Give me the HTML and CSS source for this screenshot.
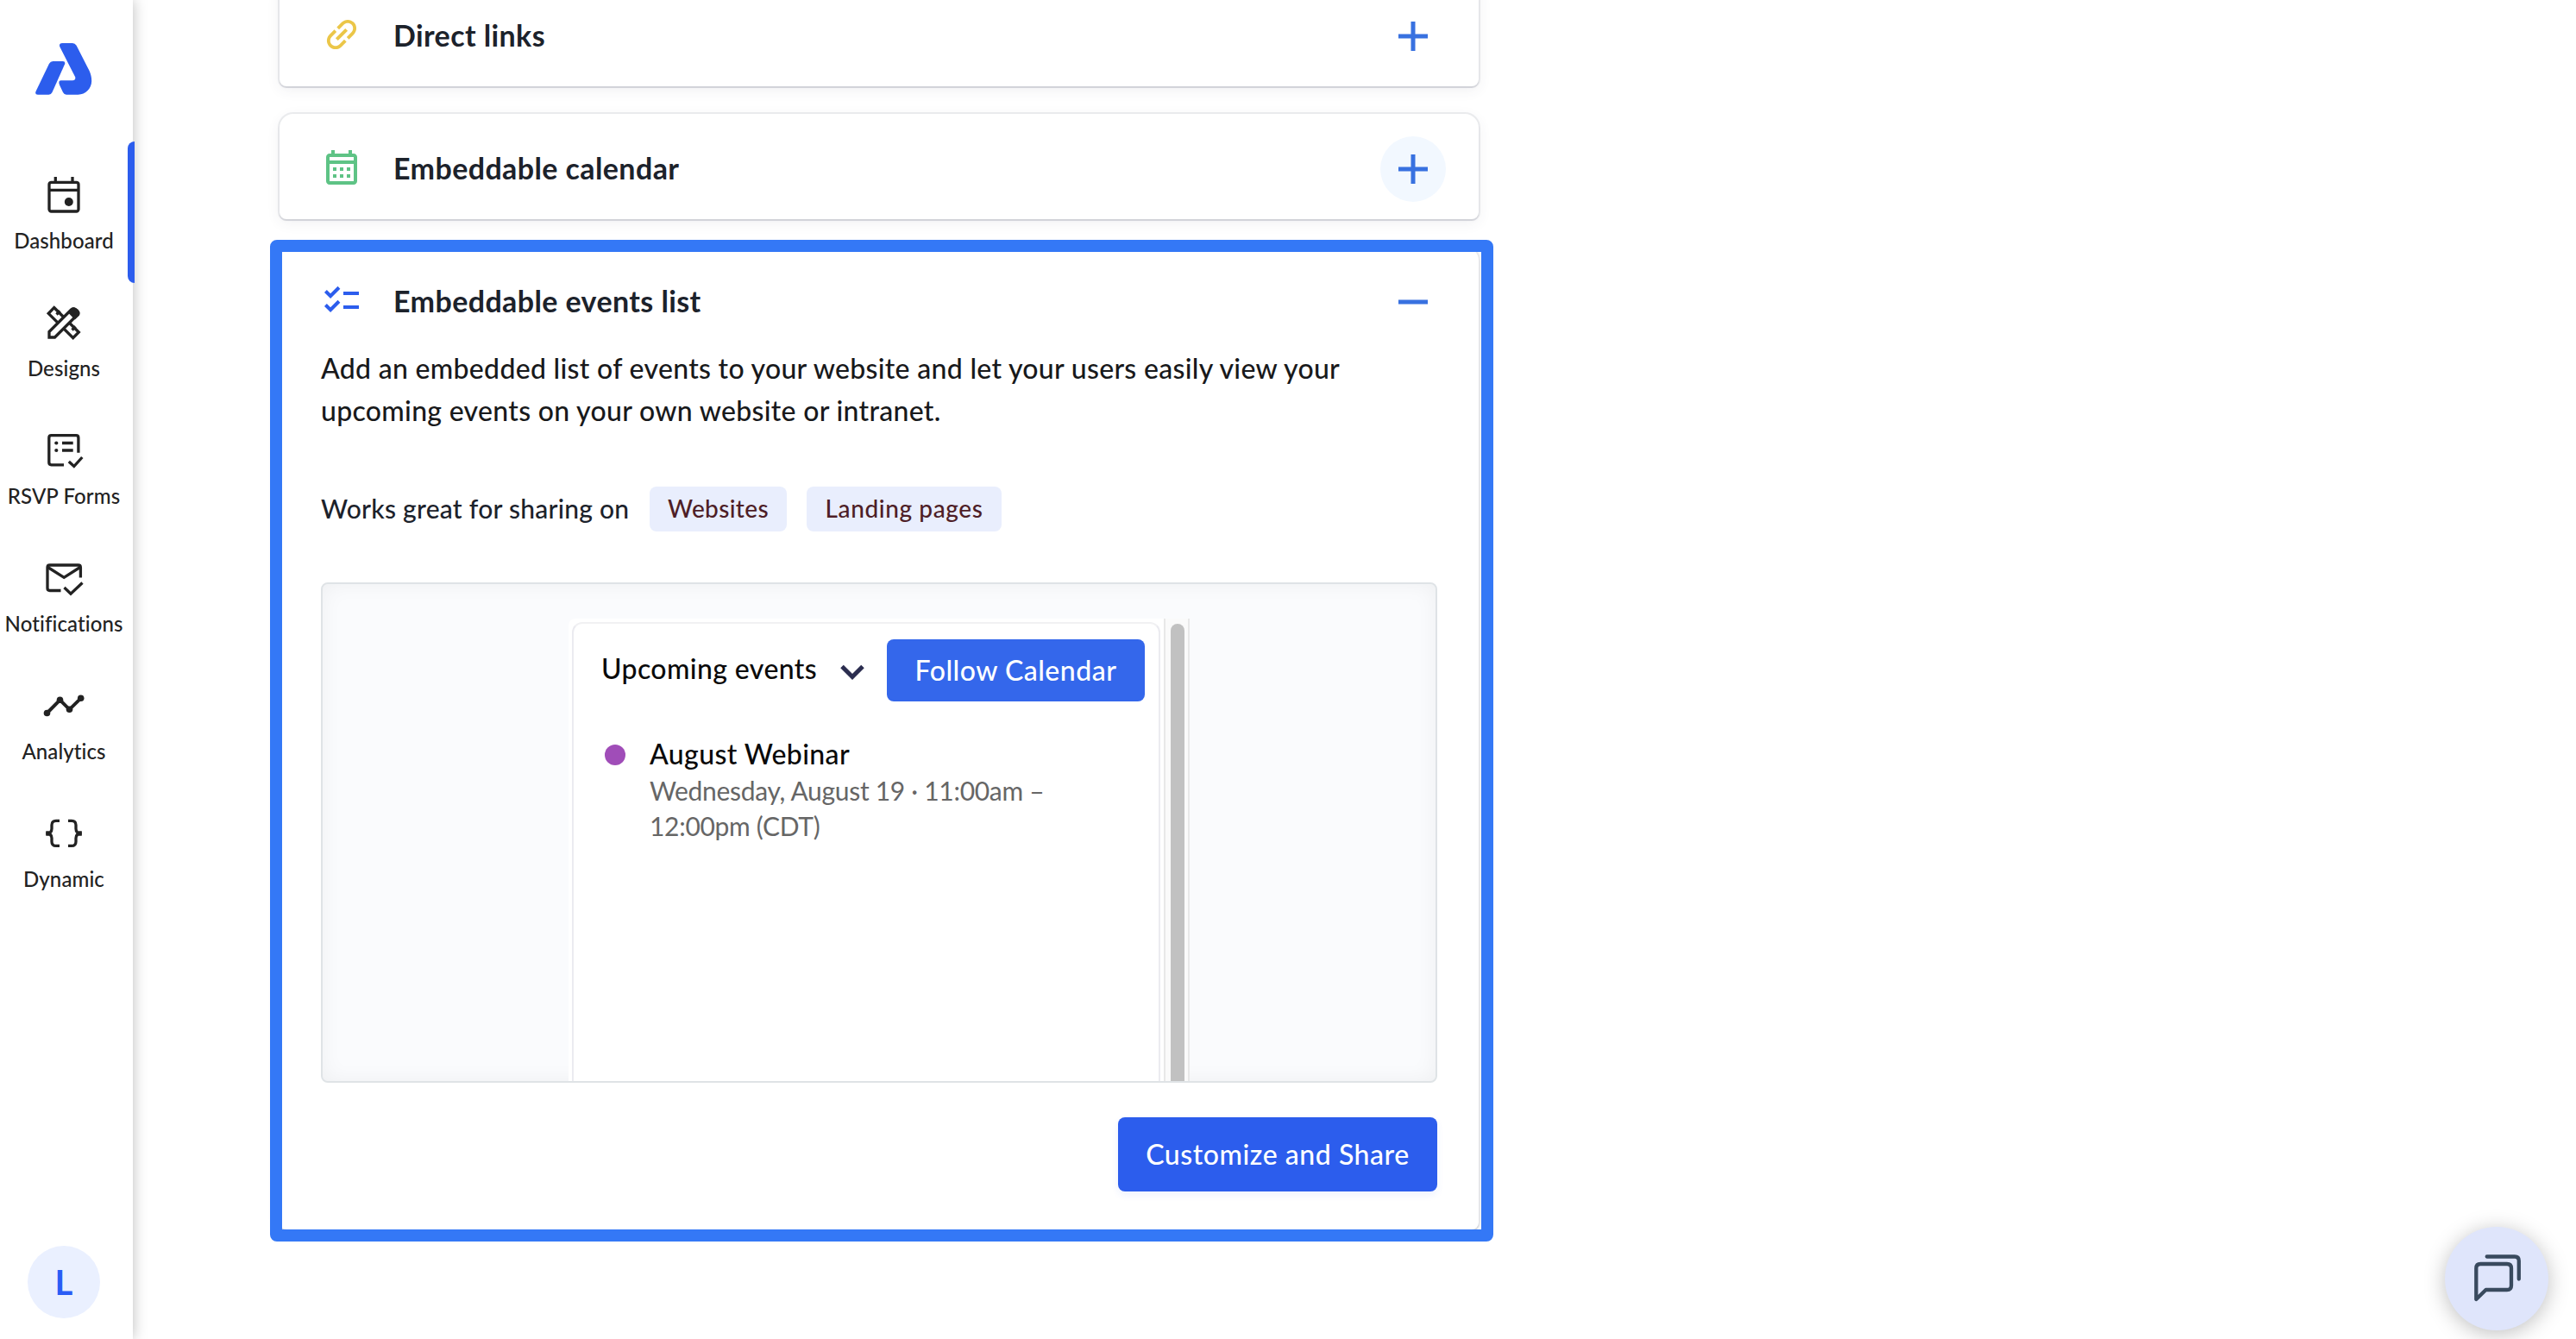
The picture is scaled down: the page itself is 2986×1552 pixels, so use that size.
FILE: index.html
```
<!DOCTYPE html>
<html lang="en">
<head>
    <meta charset="UTF-8">
    <title>Dashboard</title>
    <link rel="stylesheet" href="styles.css">
</head>
<body>
    <div class="app">
        <aside class="sidebar">
            <svg class="logo" width="66" height="60" viewBox="0 0 66 60">
                <path d="M20.5 21h11.3q3.4 0 2.2 3.6L19.5 57q-1.3 2.7-4 2.7H2.8q-3.6 0-2.3-3.7L16 23.8q1.4-2.8 4.5-2.8z"/>
                <path d="M31.5 0h11.5q3 0 4.6 2.8L62.8 32.5C64.3 36 65.2 39.5 65.2 44C65.2 52.5 58 59.7 49.5 59.7H36q-2.7 0-4-2.6L28 48.5q-2-5.3 2-5.3h13q3.8 0 3.3-3.8L28.200 4Q27 0 31.5 0z"/>
            </svg>
            <nav class="nav">
                <a class="nav-item active">
                    <svg width="50" height="50" viewBox="0 0 50 50">
                        <rect class="line" x="8" y="10.3" width="34" height="33.7" rx="2.5"/>
                        <path class="line" d="M8 19.3h34M15.3 4v6M35 4v6"/>
                        <circle cx="30.8" cy="33" r="5"/>
                    </svg>
                    <span>Dashboard</span>
                </a>
                <a class="nav-item">
                    <svg width="50" height="50" viewBox="0 0 50 50">
                        <path class="line" d="M13.7 7.5L42.3 36L35.7 42.7L7.2 14.3z"/>
                        <path class="line" d="M20.5 11.5l-4 4M38.5 29.5l-4 4"/>
                        <path class="pencil" d="M8 42v-6.5L33.5 10q2.5-2.5 5 0l1.5 1.5q2.5 2.5 0 5L14.5 42z"/>
                        <path d="M29.8 13.2l5-4.8q3-2 6 .8l1.5 1.5q2.5 3 .5 6l-5 4.8z"/>
                    </svg>
                    <span>Designs</span>
                </a>
                <a class="nav-item">
                    <svg width="50" height="50" viewBox="0 0 50 50">
                        <path class="line" d="M25 41.8H10.5q-2.7 0-2.7-2.7V10.4q0-2.7 2.7-2.7H39.2q2.7 0 2.7 2.7V27.7"/>
                        <path class="line" d="M23 16.5h12.7M23 25h12.7M30.8 38l6 5.5 9.5-10.5"/>
                        <circle cx="16.3" cy="16.5" r="2.1"/>
                        <circle cx="16.3" cy="25" r="2.1"/>
                    </svg>
                    <span>RSVP Forms</span>
                </a>
                <a class="nav-item">
                    <svg width="50" height="50" viewBox="0 0 50 50">
                        <path class="line" d="M21.5 39.5H8.7q-2.7 0-2.7-2.7V12.7q0-2.7 2.7-2.7H41.7q2.7 0 2.7 2.7V24.5"/>
                        <path class="line" d="M6.5 12.5L25.2 24.3L43.8 12.5M25.5 36l7.5 7.2L46.5 30.5"/>
                    </svg>
                    <span>Notifications</span>
                </a>
                <a class="nav-item">
                    <svg width="50" height="50" viewBox="0 0 50 50">
                        <path class="line thick" d="M5.5 33.5L20.5 18.3L31.5 29.3L44.7 16.3"/>
                        <circle cx="5.5" cy="33.5" r="3.8"/>
                        <circle cx="20.5" cy="18.3" r="3.8"/>
                        <circle cx="31.5" cy="29.3" r="3.8"/>
                        <circle cx="44.7" cy="16.3" r="3.8"/>
                    </svg>
                    <span>Analytics</span>
                </a>
                <a class="nav-item">
                    <svg width="50" height="50" viewBox="0 0 50 50">
                        <path class="line" d="M20 10.3h-4q-5 0-5 5v4.2q0 5.5-6.7 5.5q6.7 0 6.7 5.5v3.9q0 5 5 5h4"/>
                        <path class="line" d="M30 10.3h4q5 0 5 5v4.2q0 5.5 6.7 5.5q-6.7 0-6.7 5.5v3.9q0 5-5 5h-4"/>
                        <path d="M4.3 22.2h3.5v5.6H4.3zM42.3 22.2h3.5v5.6h-3.5z"/>
                    </svg>
                    <span>Dynamic</span>
                </a>
            </nav>
            <div class="avatar">L</div>
        </aside>

        <main class="content">
            <section class="card">
                <div class="card-header">
                    <svg class="icon-link" width="48" height="48" viewBox="0 0 24 24">
                        <path transform="rotate(-45 12 12)" d="M3.9 12c0-1.71 1.39-3.1 3.1-3.1h4V7H7c-2.76 0-5 2.24-5 5s2.24 5 5 5h4v-1.9H7c-1.71 0-3.1-1.39-3.1-3.1zM8 13h8v-2H8v2zm9-6h-4v1.9h4c1.71 0 3.1 1.39 3.1 3.1s-1.39 3.1-3.1 3.1h-4V17h4c2.76 0 5-2.24 5-5s-2.24-5-5-5z"/>
                    </svg>
                    <h2>Direct links</h2>
                    <button class="toggle">
                        <svg width="34" height="34" viewBox="0 0 34 34"><path d="M0 17h34M17 0v34"/></svg>
                    </button>
                </div>
            </section>

            <section class="card">
                <div class="card-header">
                    <svg class="icon-calendar" width="48" height="48" viewBox="0 0 24 24">
                        <path d="M19 4h-1V2h-2v2H8V2H6v2H5c-1.11 0-1.99.9-1.99 2L3 20c0 1.1.89 2 2 2h14c1.1 0 2-.9 2-2V6c0-1.1-.9-2-2-2zm0 16H5V10h14v10zm0-12H5V6h14v2zM9 14H7v-2h2v2zm4 0h-2v-2h2v2zm4 0h-2v-2h2v2zm-8 4H7v-2h2v2zm4 0h-2v-2h2v2zm4 0h-2v-2h2v2z"/>
                    </svg>
                    <h2>Embeddable calendar</h2>
                    <button class="toggle hovered">
                        <svg width="34" height="34" viewBox="0 0 34 34"><path d="M0 17h34M17 0v34"/></svg>
                    </button>
                </div>
            </section>

            <section class="card open">
                <div class="card-header">
                    <svg class="icon-list" width="48" height="48" viewBox="0 0 24 24">
                        <path d="M22 7h-9v2h9V7zm0 8h-9v2h9v-2zM5.54 11L2 7.46l1.41-1.41 2.12 2.12 4.24-4.24 1.41 1.41L5.54 11zm0 8L2 15.46l1.41-1.41 2.12 2.12 4.24-4.24 1.41 1.41L5.54 19z"/>
                    </svg>
                    <h2>Embeddable events list</h2>
                    <button class="toggle">
                        <svg width="34" height="34" viewBox="0 0 34 34"><path d="M0 17h34"/></svg>
                    </button>
                </div>
                <div class="card-body">
                    <p class="description">Add an embedded list of events to your website and let your users easily view your upcoming events on your own website or intranet.</p>
                    <div class="sharing">
                        <span class="sharing-label">Works great for sharing on</span>
                        <span class="tag">Websites</span>
                        <span class="tag tag-wide">Landing pages</span>
                    </div>
                    <div class="preview">
                        <div class="embed">
                            <div class="widget">
                                <div class="widget-header">
                                    <span class="widget-title">Upcoming events</span>
                                    <svg class="chevron" width="30" height="20" viewBox="0 0 30 20"><path d="M3 3.5l12 12 12-12"/></svg>
                                    <button class="follow">Follow Calendar</button>
                                </div>
                                <div class="event">
                                    <span class="dot"></span>
                                    <div>
                                        <div class="event-name">August Webinar</div>
                                        <div class="event-date">Wednesday, August 19 · 11:00am – 12:00pm (CDT)</div>
                                    </div>
                                </div>
                            </div>
                            <div class="scrollbar"><div class="thumb"></div></div>
                        </div>
                    </div>
                    <button class="customize">Customize and Share</button>
                </div>
                <div class="highlight"></div>
            </section>
        </main>
    </div>

    <button class="chat">
        <svg width="120" height="120" viewBox="0 0 120 120">
            <path d="M36.3 84V48q0-5 5-5H72q5 0 5 5v20q0 5-5 5H47.5z"/>
            <path d="M48.7 34.5H81q4.8 0 4.8 4.8V60.5"/>
        </svg>
    </button>
</body>
</html>
```

FILE: styles.css
```
* {
    box-sizing: border-box;
}
body {
    margin: 0;
    font-family: Lato, "Open Sans", sans-serif;
    background: white;
    overflow: hidden;
}
button {
    border: none;
    padding: 0;
    font-family: inherit;
    cursor: pointer;
}
.app {
    display: flex;
    height: 1552px;
}

/* sidebar */
.sidebar {
    width: 154px;
    display: flex;
    flex-direction: column;
    align-items: center;
    padding: 50px 6px 24px 0;
    background: white;
    box-shadow: 0 0 16px rgba(0, 0, 0, 0.27);
    clip-path: inset(0 -20px 0 0);
}
.logo {
    fill: #2c5ded;
    margin-bottom: 91px;
}
.nav {
    width: 100%;
}
.nav-item {
    position: relative;
    display: flex;
    flex-direction: column;
    align-items: center;
    height: 148px;
    font-size: 24px;
    font-weight: 500;
    line-height: 28px;
    letter-spacing: 0.1px;
    color: #222;
    white-space: nowrap;
}
.nav-item svg {
    fill: #222;
    margin-bottom: 14px;
}
.nav-item .line {
    fill: none;
    stroke: #222;
    stroke-width: 3.3;
}
.nav-item .thick {
    stroke-width: 4;
}
.nav-item .pencil {
    fill: white;
    stroke: #222;
    stroke-width: 3.3;
}
.nav-item.active::after {
    content: "";
    position: absolute;
    top: -37px;
    right: -8px;
    width: 8px;
    height: 164px;
    background: #2c5ded;
    border-radius: 8px 0 0 8px;
}
.avatar {
    width: 84px;
    height: 84px;
    margin-top: auto;
    border-radius: 50%;
    background: #eaf0ff;
    color: #2a5cf5;
    font-size: 40px;
    font-weight: bold;
    line-height: 84px;
    text-align: center;
}

/* cards */
.content {
    width: 1390px;
    margin-left: 170px;
    margin-top: -22px;
    display: flex;
    flex-direction: column;
    gap: 32px;
}
.card {
    position: relative;
    flex-shrink: 0;
    background: white;
    border-radius: 16px 16px 8px 8px;
    box-shadow: 0 0 0 2px rgba(60, 64, 90, 0.09), 0 2px 1px rgba(60, 64, 90, 0.11), 0 4px 16px rgba(60, 64, 90, 0.08);
}
.card-header {
    display: flex;
    align-items: center;
    height: 122px;
    padding: 2px 38px 0 48px;
}
.card-header h2 {
    margin: 0 auto 0 36px;
    padding-top: 1px;
    font-size: 34px;
    font-weight: 700;
    line-height: 40px;
    letter-spacing: 0.4px;
    color: #1c222b;
}
.icon-link {
    fill: #ebc648;
}
.icon-calendar {
    fill: #5ec385;
}
.icon-list {
    fill: #2c5ded;
}
.toggle {
    display: flex;
    align-items: center;
    justify-content: center;
    width: 76px;
    height: 76px;
    margin-top: 4px;
    border-radius: 50%;
    background: none;
}
.toggle.hovered {
    background: #f2f8ff;
}
.toggle path {
    stroke: #3871e0;
    stroke-width: 5;
}
.card-body {
    display: flex;
    flex-direction: column;
    padding: 0 48px 44px;
}
.description {
    margin: -6px 0 64px;
    font-size: 32px;
    font-weight: 500;
    line-height: 49px;
    letter-spacing: 0.3px;
    color: #18191b;
}
.sharing {
    display: flex;
    align-items: center;
    gap: 23px;
    height: 52px;
    margin-bottom: 59px;
}
.sharing-label {
    width: 358px;
    padding-bottom: 2px;
    font-size: 30px;
    font-weight: 500;
    letter-spacing: 0.25px;
    color: #1c222b;
    white-space: nowrap;
}
.tag {
    width: 159px;
    height: 52px;
    border-radius: 8px;
    background: #e9eefd;
    color: #4e1e27;
    font-size: 28px;
    font-weight: 500;
    line-height: 51px;
    letter-spacing: 0.35px;
    text-align: center;
}
.tag-wide {
    width: 226px;
    letter-spacing: 0.6px;
}

/* embed preview */
.preview {
    display: flex;
    justify-content: center;
    height: 580px;
    padding-top: 40px;
    overflow: hidden;
    border: 2px solid #dfe3e6;
    border-radius: 8px;
    background: #fafbfd;
    box-shadow: inset 0 0 24px rgba(0, 0, 0, 0.05);
}
.embed {
    display: flex;
    width: 720px;
    background: white;
    border-radius: 8px 8px 0 0;
}
.widget {
    width: 682px;
    height: 600px;
    margin: 4px 4px 0;
    padding-top: 18px;
    border: 2px solid #ebebf0;
    border-top-color: #f1f1f3;
    border-radius: 12px;
}
.widget-header {
    display: flex;
    align-items: center;
    padding: 0 16px 0 32px;
}
.widget-title {
    padding-bottom: 5px;
    font-size: 32px;
    font-weight: 500;
    line-height: 40px;
    letter-spacing: 0.4px;
    color: #0a0a0a;
    white-space: nowrap;
}
.chevron {
    margin: 4px 25px 0 auto;
    fill: none;
    stroke: #2b2d4f;
    stroke-width: 5;
}
.follow {
    width: 299px;
    height: 72px;
    padding-bottom: 1px;
    border-radius: 8px;
    background: #3467eb;
    color: white;
    font-size: 32px;
    font-weight: 500;
    letter-spacing: 0.5px;
}
.event {
    display: flex;
    margin-top: 41px;
    padding: 0 32px 0 36px;
}
.dot {
    flex-shrink: 0;
    width: 24px;
    height: 24px;
    margin: 9px 28px 0 0;
    border-radius: 50%;
    background: #a04db8;
}
.event-name {
    font-size: 32px;
    font-weight: 500;
    line-height: 40px;
    letter-spacing: 0.37px;
    color: #0a0a0a;
}
.event-date {
    margin-top: 2px;
    font-size: 30px;
    line-height: 41px;
    letter-spacing: -0.3px;
    color: #666;
}
.scrollbar {
    width: 30px;
    padding: 6px 4px 0 6px;
    border: solid #e8e8e8;
    border-width: 0 2px;
    background: #fafafa;
}
.thumb {
    height: 600px;
    border-radius: 8px;
    background: #c1c1c1;
}
.customize {
    align-self: flex-end;
    width: 370px;
    height: 86px;
    margin-top: 40px;
    padding-bottom: 2px;
    border-radius: 8px;
    background: #2c5ded;
    box-shadow: 0 4px 8px rgba(44, 93, 237, 0.08);
    color: white;
    font-size: 32px;
    font-weight: 500;
    letter-spacing: 0.55px;
}
.highlight {
    position: absolute;
    inset: -8px -17px -14px -11px;
    border: 14px solid #3478f6;
    border-radius: 8px;
    pointer-events: none;
}

/* chat bubble */
.chat {
    position: fixed;
    right: 32px;
    bottom: 10px;
    width: 120px;
    height: 120px;
    border-radius: 50%;
    background: #dfe5fb;
    box-shadow: 0 4px 24px rgba(0, 0, 0, 0.25);
}
.chat svg {
    display: block;
    fill: none;
    stroke: #394a5e;
    stroke-width: 4.3;
    stroke-linecap: round;
    stroke-linejoin: round;
}
```
